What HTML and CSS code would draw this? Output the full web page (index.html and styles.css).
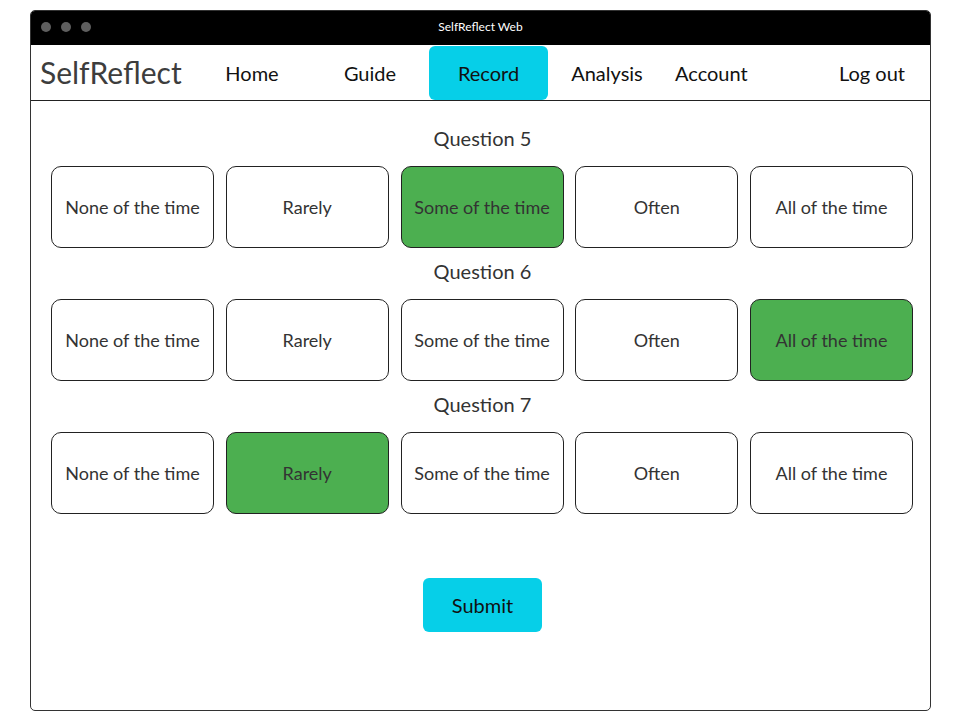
FILE: index.html
```html
<!DOCTYPE html>
<html lang="en">
<head>
<meta charset="utf-8">
<title>SelfReflect Web</title>
<link rel="stylesheet" href="styles.css">
</head>
<body>
<div class="window">
  <div class="titlebar">
    <div class="dots"><span class="dot"></span><span class="dot"></span><span class="dot"></span></div>
    <div class="title">SelfReflect Web</div>
  </div>
  <nav class="nav">
    <div class="logo">SelfReflect</div>
    <a class="nav-item">Home</a>
    <a class="nav-item">Guide</a>
    <a class="nav-item active">Record</a>
    <a class="nav-item">Analysis</a>
    <a class="nav-item account">Account</a>
    <a class="nav-item logout">Log out</a>
  </nav>
  <main class="content">
    <section class="question">
      <div class="q-label">Question 5</div>
      <div class="options">
        <div class="option">None of the time</div>
        <div class="option">Rarely</div>
        <div class="option selected">Some of the time</div>
        <div class="option">Often</div>
        <div class="option">All of the time</div>
      </div>
    </section>
    <section class="question">
      <div class="q-label">Question 6</div>
      <div class="options">
        <div class="option">None of the time</div>
        <div class="option">Rarely</div>
        <div class="option">Some of the time</div>
        <div class="option">Often</div>
        <div class="option selected">All of the time</div>
      </div>
    </section>
    <section class="question">
      <div class="q-label">Question 7</div>
      <div class="options">
        <div class="option">None of the time</div>
        <div class="option selected">Rarely</div>
        <div class="option">Some of the time</div>
        <div class="option">Often</div>
        <div class="option">All of the time</div>
      </div>
    </section>
    <div class="submit-row"><button class="submit">Submit</button></div>
  </main>
</div>
</body>
</html>
```
FILE: styles.css
```css
* { box-sizing: border-box; }
html, body { margin: 0; padding: 0; background: #fff; }
body {
  font-family: "Source Sans Pro", Lato, "Liberation Sans", sans-serif;
  color: #333;
  padding: 10px 30px 16px 30px;
}
.window {
  width: 901px;
  height: 701px;
  border: 1px solid #333;
  border-radius: 5px;
  overflow: hidden;
  display: flex;
  flex-direction: column;
}
.titlebar {
  height: 34px;
  background: #000;
  display: flex;
  align-items: center;
  position: relative;
  flex: none;
}
.dots { display: flex; gap: 10px; padding-left: 10px; padding-bottom: 2px; }
.dot { width: 10px; height: 10px; border-radius: 50%; background: #5f5f5f; }
.title {
  position: absolute;
  left: 0; right: 0; top: 0; bottom: 0;
  display: flex; align-items: center; justify-content: center;
  color: #fff;
  font-size: 12px;
  padding-bottom: 4px;
}
.nav {
  height: 56px;
  border-bottom: 1px solid #222;
  display: flex;
  align-items: stretch;
  flex: none;
}
.logo {
  width: 162px;
  padding-left: 9px;
  font-size: 30px;
  color: #3d3d3d;
  display: flex;
  align-items: center;
  padding-bottom: 2px;
}
.nav-item {
  width: 118px;
  display: flex;
  align-items: center;
  justify-content: center;
  font-size: 20px;
  color: #111;
  margin: 1px 0 0 0;
}
.nav-item.active {
  width: 119px;
  background: #06cfe8;
  border-radius: 6px;
}
.nav-item.account { width: auto; margin-left: 9px; }
.nav-item.logout { width: auto; margin-left: auto; padding-right: 25px; }
.content {
  flex: 1;
  padding: 23px 17px 0 20px;
}
.question { margin-bottom: 9px; }
.q-label {
  height: 28px;
  line-height: 28px;
  text-align: center;
  font-size: 20px;
  color: #333;
  margin-bottom: 14px;
  padding-left: 1px;
}
.options {
  display: grid;
  grid-template-columns: repeat(5, 163px);
  column-gap: 11.75px;
}
.option {
  height: 82px;
  border: 1px solid #222;
  border-radius: 10px;
  display: flex;
  align-items: center;
  justify-content: center;
  font-size: 18px;
  color: #333;
  background: #fff;
}
.option.selected { background: #4caf50; }
.submit-row {
  display: flex;
  justify-content: center;
  padding-top: 55px;
  padding-left: 1px;
}
.submit {
  width: 119px;
  height: 54px;
  border: none;
  border-radius: 6px;
  background: #06cfe8;
  font-family: inherit;
  font-size: 20px;
  color: #111;
}
```
